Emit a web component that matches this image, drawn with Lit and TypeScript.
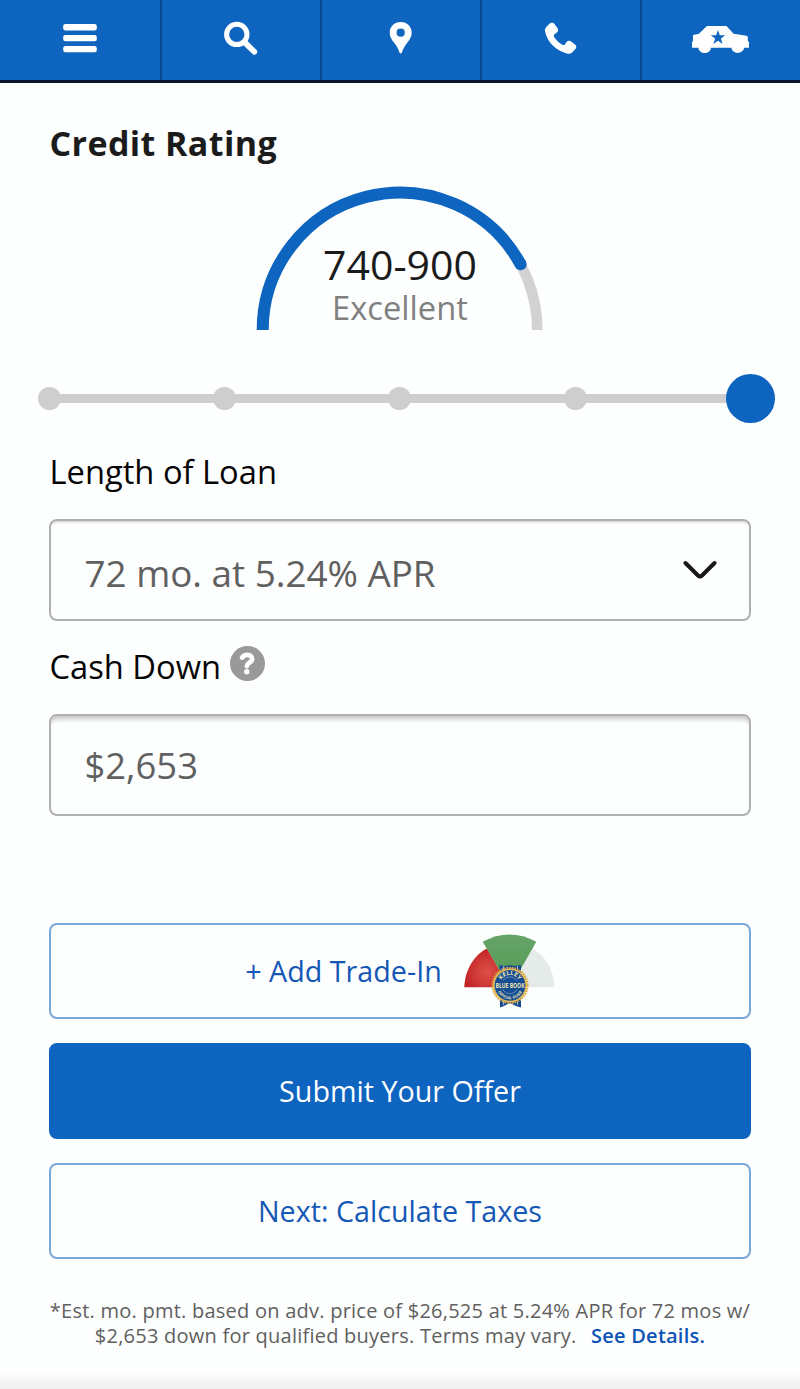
import { LitElement, html, css, svg } from 'lit';
import { customElement, state } from 'lit/decorators.js';

const icons = {
  menu: svg`
    <svg class="icon" width="60" height="50" viewBox="50 14 60 50">
      <rect x="63.2" y="24" width="33.6" height="6.4" rx="2.2" />
      <rect x="63.2" y="35" width="33.6" height="6.2" rx="2.2" />
      <rect x="63.2" y="46" width="33.6" height="6.2" rx="2.2" />
    </svg>`,
  search: svg`
    <svg class="icon" width="60" height="50" viewBox="210 14 60 50">
      <circle cx="236.8" cy="34.4" r="10.2" fill="none" stroke="#fff" stroke-width="5" />
      <path d="M244.5 42.1L254.3 51.8" stroke="#fff" stroke-width="5.8" stroke-linecap="round" />
    </svg>`,
  pin: svg`
    <svg class="icon" width="60" height="50" viewBox="370 14 60 50">
      <path fill-rule="evenodd" d="M400.7 22C394.4 22 389.7 26.7 389.7 32.7C389.7 36.4 391.5 39.4 393.8 42.3C396.5 45.6 398.4 49 399.4 52.2Q400.7 54.6 402 52.2C403 49 404.9 45.6 407.6 42.3C409.9 39.4 411.7 36.4 411.7 32.7C411.7 26.7 407 22 400.7 22ZM400.7 28.6A4.1 4.1 0 1 1 400.7 36.8A4.1 4.1 0 1 1 400.7 28.6Z" />
    </svg>`,
  phone: svg`
    <svg class="icon" width="60" height="50" viewBox="530 14 60 50">
      <path d="M549.7 23.6C551.2 22.4 553.4 22.6 554.8 24.4L557.4 28C558.5 29.6 558.3 31.2 557.1 32.3L554.6 34.2C553.6 35 553.6 36 554.3 37.2C556.4 40.6 559.4 43 562.2 44.7C563.4 45.3 564.3 45.1 565.1 44.2L566.4 42.2C567.7 40.7 569.4 40.4 571.1 41.5L575 44.5C576.6 45.8 576.7 47.5 575.4 49.1L572.3 52.2C570.9 53.6 569 54 566.9 53.4C555.4 50.2 548 43 545.2 32C544.7 30 545 28.4 546.3 27Z" />
    </svg>`,
  car: svg`
    <svg class="icon" width="60" height="50" viewBox="690 14 60 50">
      <path fill-rule="evenodd" d="M707 26H726.5L733.6 33.8L746.4 35.8Q747.8 36 747.8 37.5V41.5H749V47.7H744A6.3 5.2 0 0 1 731.4 47.7H711A6.3 5.2 0 0 1 698.4 47.7H692V41.5H693V35.5Q693 34.8 694.2 34.7L698.6 34ZM718 30L716.2 35.2H710.7L715.1 38.6L713.5 44L718 40.8L722.5 44L720.9 38.6L725.3 35.2H719.8Z" />
    </svg>`,
};

@customElement('nav-bar')
export class NavBar extends LitElement {
  static styles = css`
    :host {
      display: block;
    }

    .bar {
      display: grid;
      grid-template-columns: repeat(5, 1fr);
      height: 83px;
      box-sizing: border-box;
      background-color: #0e65bf;
      border-bottom: 3px solid #08152a;
    }

    .item {
      display: flex;
      justify-content: center;
      padding: 14px 0 0 0;
      border: 0;
      background: none;
      box-shadow: inset 2px 0 0 #0b4a91;
    }

    .item:first-child {
      box-shadow: none;
    }

    .icon {
      display: block;
      fill: #fff;
    }
  `;

  render() {
    return html`
      <nav class="bar">
        <button class="item" aria-label="Menu">${icons.menu}</button>
        <button class="item" aria-label="Search">${icons.search}</button>
        <button class="item" aria-label="Location">${icons.pin}</button>
        <button class="item" aria-label="Call">${icons.phone}</button>
        <button class="item" aria-label="Garage">${icons.car}</button>
      </nav>
    `;
  }
}

@customElement('credit-gauge')
export class CreditGauge extends LitElement {
  static styles = css`
    :host {
      display: grid;
      justify-content: center;
    }

    .arc,
    .value {
      grid-area: 1 / 1;
    }

    .arc {
      display: block;
    }

    .value {
      text-align: center;
    }

    .range {
      padding-top: 54px;
      font-size: 41px;
      line-height: 48px;
      color: #1b1b1b;
    }

    .rating {
      padding-top: 1px;
      font-size: 32.7px;
      line-height: 38px;
      color: #808080;
    }
  `;

  render() {
    return html`
      <svg class="arc" width="288" height="144" viewBox="256 186 288 144">
        <path d="M262.7 330A137.3 137.3 0 0 1 537.3 330" fill="none" stroke="#d2d2d3" stroke-width="10.6" />
        <path d="M262.7 330A137.3 137.3 0 0 1 520.6 264.3" fill="none" stroke="#0e65bf" stroke-width="12" />
        <circle cx="520.6" cy="264.3" r="6" fill="#0e65bf" />
      </svg>
      <div class="value">
        <div class="range">740-900</div>
        <div class="rating">Excellent</div>
      </div>
    `;
  }
}

@customElement('rating-slider')
export class RatingSlider extends LitElement {
  static styles = css`
    :host {
      display: block;
    }

    .track {
      display: flex;
      align-items: center;
      justify-content: space-between;
      height: 49px;
      margin: 0 37.8px 0 37.5px;
      background: linear-gradient(#cececf, #cececf) center / calc(100% - 24px) 9.4px no-repeat;
    }

    .stop {
      width: 23px;
      height: 23px;
      border-radius: 50%;
      background-color: #cececf;
    }

    .stop.active {
      width: 49px;
      height: 49px;
      margin: 0 -13px;
      background-color: #0e65bf;
    }
  `;

  @state() selected = 4;

  render() {
    return html`
      <div class="track">
        ${[0, 1, 2, 3, 4].map(
          (i) => html`<div class="stop ${i === this.selected ? 'active' : ''}" @click=${() => (this.selected = i)}></div>`
        )}
      </div>
    `;
  }
}

@customElement('blue-book-badge')
export class BlueBookBadge extends LitElement {
  static styles = css`
    :host {
      display: block;
    }

    .badge {
      display: block;
      margin-top: 2px;
    }

    .seal-text {
      font-family: 'Open Sans', sans-serif;
      font-weight: 700;
      fill: #eee3ae;
      text-anchor: middle;
    }
  `;

  render() {
    return html`
      <svg class="badge" width="92" height="76" viewBox="463 933 92 76">
        <defs>
          <radialGradient id="red" gradientUnits="userSpaceOnUse" cx="487" cy="972" r="28">
            <stop offset="0" stop-color="#dd5148" />
            <stop offset="1" stop-color="#bd1b20" />
          </radialGradient>
          <linearGradient id="green" x1="0" y1="0" x2="0" y2="1">
            <stop offset="0" stop-color="#66a468" />
            <stop offset="1" stop-color="#529954" />
          </linearGradient>
          <path id="arcTop" d="M500 985A10 10 0 0 1 520 985" />
          <path id="arcBottom" d="M496.2 985.3A13.8 13.8 0 0 0 523.8 985.3" />
        </defs>
        <path d="M509.5 987.3H464.3C464.8 970 474 955 487 948.5Z" fill="url(#red)" />
        <path d="M509.5 987.3H554.3C554 970 545 955 532 948.5Z" fill="#e5ebe8" />
        <path d="M510 988L482.7 941.8Q509.5 927 536.3 941.8Z" fill="url(#green)" />
        <path d="M499.5 965L505 966L510 965L515 966L521 965V1007.5L516 1006L510 1003L504 1006L500 1007.5Z" fill="#174a91" />
        <path d="M503.5 966V1005M517.5 966V1005" stroke="#9ab5cd" stroke-width="1" />
        <circle cx="510" cy="985.3" r="17.4" fill="none" stroke="#d7a942" stroke-width="2.4" stroke-dasharray="1.7 .9" />
        <circle cx="510" cy="985.3" r="16.9" fill="#e7bc59" />
        <circle cx="510" cy="985.3" r="15.4" fill="#164e95" />
        <circle cx="510" cy="985.3" r="8.4" fill="none" stroke="#7897aa" stroke-width=".8" />
        <rect x="495.3" y="980.8" width="29.4" height="8" fill="#164e95" />
        <text class="seal-text" font-size="7" x="510" y="988" textLength="29" lengthAdjust="spacingAndGlyphs">BLUE BOOK</text>
        <text class="seal-text" font-size="6"><textPath href="#arcTop" startOffset="50%">KELLEY</textPath></text>
        <text class="seal-text" font-size="3.8"><textPath href="#arcBottom" startOffset="50%">OFFICIAL GUIDE</textPath></text>
      </svg>
    `;
  }
}

@customElement('app-root')
export class AppRoot extends LitElement {
  static styles = css`
    :host {
      display: flex;
      flex-direction: column;
      height: 1389px;
      overflow: hidden;
      background-color: #fdfefe;
      font-family: 'Open Sans', sans-serif;
    }

    .title {
      margin: 0;
      padding: 36px 49.5px 19px;
      font-size: 34px;
      line-height: 48px;
      font-weight: 700;
      letter-spacing: 0.4px;
      color: #1b1b1b;
    }

    .slider {
      margin-top: 44px;
    }

    .form {
      display: flex;
      flex-direction: column;
      padding: 0 49px;
    }

    .label {
      display: flex;
      align-items: center;
      gap: 9px;
      height: 48px;
      padding-left: 0.5px;
      font-size: 32.7px;
      color: #050505;
    }

    .label.loan {
      margin-top: 24px;
    }

    .label.cash {
      margin-top: 21px;
    }

    .help {
      display: block;
      margin-top: -6px;
    }

    .field {
      display: flex;
      align-items: center;
      justify-content: space-between;
      box-sizing: border-box;
      height: 102px;
      padding: 5px 32.5px 0 33.5px;
      border: 2px solid #aeb0b1;
      border-radius: 8px;
      font-size: 36.8px;
      color: #606060;
      box-shadow: inset 0 3px 3px -2px #c8c8c8;
    }

    .field.loan {
      margin-top: 24px;
    }

    .field.cash {
      margin-top: 24px;
      padding-top: 0;
      font-size: 36.4px;
      box-shadow: inset 0 7px 5px -4px #c4c4c4;
    }

    .chevron {
      display: block;
      margin-top: -4px;
    }

    .amount {
      margin-top: -1px;
    }

    .actions {
      display: flex;
      flex-direction: column;
      gap: 24px;
      margin-top: 107px;
    }

    .button {
      display: flex;
      align-items: center;
      justify-content: center;
      gap: 21px;
      box-sizing: border-box;
      height: 96px;
      padding: 0 0 2px;
      border: 2px solid #78a7da;
      border-radius: 8px;
      background: none;
      font-family: inherit;
      font-size: 28.7px;
      color: #1557b5;
    }

    .button.primary {
      border-color: #0e65bf;
      background-color: #0e65bf;
      color: #fff;
    }

    .note {
      margin: 39px 40px 0;
      text-align: center;
      font-size: 20px;
      line-height: 25px;
      letter-spacing: 0.24px;
      color: #606060;
    }

    .details {
      margin-left: 9px;
      font-weight: 600;
      color: #0d54b6;
      text-decoration: none;
    }

    .fade {
      height: 16px;
      margin-top: auto;
      background: linear-gradient(#fdfefe, #eeeeee);
    }
  `;

  render() {
    return html`
      <nav-bar></nav-bar>
      <h1 class="title">Credit Rating</h1>
      <credit-gauge></credit-gauge>
      <rating-slider class="slider"></rating-slider>
      <div class="form">
        <div class="label loan">Length of Loan</div>
        <div class="field loan">
          <span>72 mo. at 5.24% APR</span>
          <svg class="chevron" width="34" height="22" viewBox="0 0 34 22">
            <path d="M2.5 3L15 15.5Q17 17.5 19 15.5L31.5 3" fill="none" stroke="#181818" stroke-width="4" stroke-linecap="round" />
          </svg>
        </div>
        <div class="label cash">
          <span>Cash Down</span>
          <svg class="help" width="35" height="35" viewBox="0 0 35 35">
            <circle cx="17.5" cy="17.5" r="17.5" fill="#999" />
            <path d="M12 11.6C13.5 9.5 15.2 8.9 17.4 8.9C20.3 8.9 22.2 10.5 22.2 12.9C22.2 16.5 17.2 16.4 16.8 20.2" fill="none" stroke="#fdfefe" stroke-width="4.6" stroke-linecap="round" />
            <circle cx="16.8" cy="25.7" r="2.7" fill="#fdfefe" />
          </svg>
        </div>
        <div class="field cash"><span class="amount">$2,653</span></div>
        <div class="actions">
          <button class="button"><span>+ Add Trade-In</span><blue-book-badge></blue-book-badge></button>
          <button class="button primary">Submit Your Offer</button>
          <button class="button">Next: Calculate Taxes</button>
        </div>
      </div>
      <p class="note">
        *Est. mo. pmt. based on adv. price of $26,525 at 5.24% APR for 72 mos w/<br />
        $2,653 down for qualified buyers. Terms may vary.
        <a class="details" href="#">See Details.</a>
      </p>
      <div class="fade"></div>
    `;
  }
}
